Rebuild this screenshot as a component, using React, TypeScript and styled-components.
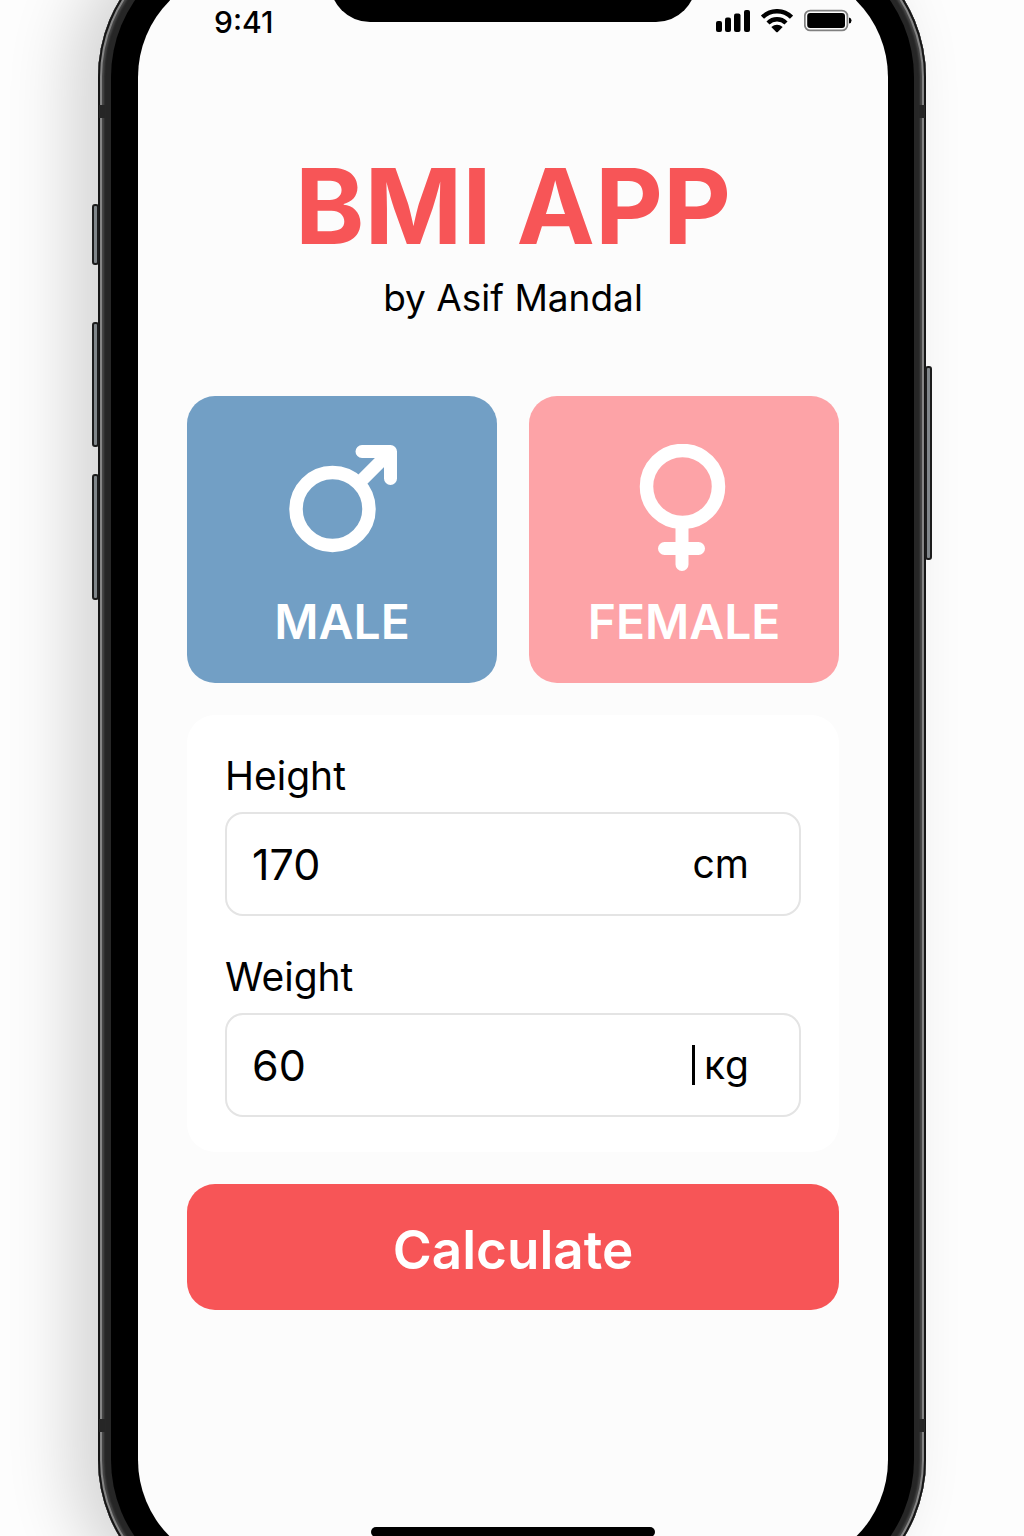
import React, { useState } from "react";
import styled, { createGlobalStyle } from "styled-components";

const GlobalStyle = createGlobalStyle`
  *, *::before, *::after { box-sizing: border-box; }
  body {
    margin: 0;
    background: #fdfdfd;
    color: #000;
    font-family: Inter, "Liberation Sans", sans-serif;
  }
`;

const Stage = styled.div`
  display: flex;
  justify-content: center;
  overflow: hidden;
`;

const Phone = styled.div`
  position: relative;
  width: 100%;
  max-width: 828px;
  margin: -71px 0;
  padding: 13px 12px 13px 13px;
  border-radius: 148px;
  background: #262626;
  box-shadow:
    inset 0 0 0 2px #151515,
    inset 0 0 0 4px #858585,
    inset 0 0 2px 6px #484848,
    -28px 0 64px rgba(0, 0, 0, 0.16);
`;

const SideButton = styled.span<{ $side: "left" | "right"; $top: number; $length: number }>`
  position: absolute;
  ${(p) => p.$side}: -6px;
  top: ${(p) => p.$top}px;
  width: 7px;
  height: ${(p) => p.$length}px;
  border: 2px solid #1c1c1c;
  border-radius: 3px;
  background: #80868a;
`;

const Antenna = styled.span<{ $side: "left" | "right"; $edge: "top" | "bottom" }>`
  position: absolute;
  ${(p) => p.$side}: 1px;
  ${(p) => p.$edge}: 176px;
  width: 6px;
  height: 13px;
  background: #262626;
`;

const Bezel = styled.div`
  padding: 27px 26px 27px 27px;
  border-radius: 135px;
  background: #000;
`;

const Screen = styled.div`
  display: flex;
  flex-direction: column;
  border-radius: 108px;
  background: #fcfcfc;
  overflow: hidden;
`;

const StatusBar = styled.div`
  display: grid;
  grid-template-columns: 1fr 366px 1fr;
  align-items: start;
`;

const Time = styled.time`
  padding: 38px 0 0 76px;
  font-size: 30px;
  line-height: 30px;
  font-weight: 500;
`;

const Notch = styled.div`
  height: 53px;
  border-radius: 0 0 40px 40px;
  background: #000;
`;

const Indicators = styled.div`
  display: flex;
  justify-content: flex-end;
  align-items: center;
  height: 68px;
  gap: 11px;
  padding: 36px 36px 0 0;
`;

const Content = styled.main`
  display: flex;
  flex-direction: column;
  gap: 32px;
  padding: 113px 49px 217px;
`;

const Header = styled.header`
  display: flex;
  flex-direction: column;
  gap: 14px;
  margin-bottom: 44px;
  text-align: center;
`;

const Title = styled.h1`
  margin: 0;
  color: #f75557;
  font-size: 105px;
  line-height: 112px;
  font-weight: 700;
`;

const Byline = styled.p`
  margin: 0;
  font-size: 37px;
  line-height: 44px;
`;

const Genders = styled.div`
  display: grid;
  grid-template-columns: 1fr 1fr;
  gap: 32px;
`;

const GenderCard = styled.button<{ $color: string }>`
  display: flex;
  flex-direction: column;
  align-items: center;
  gap: 22px;
  padding: 48px 16px 33px;
  border: 0;
  border-radius: 28px;
  background: ${(p) => p.$color};
  color: #fff;
  font: inherit;
  font-size: 48px;
  line-height: 56px;
  font-weight: 600;
  cursor: pointer;
`;

const FormCard = styled.div`
  display: flex;
  flex-direction: column;
  gap: 37px;
  padding: 37px 38px 35px;
  border-radius: 28px;
  background: #fff;
`;

const Field = styled.div`
  display: flex;
  flex-direction: column;
  gap: 12px;
`;

const Label = styled.label`
  font-size: 39px;
  line-height: 48px;
`;

const InputBox = styled.div`
  display: flex;
  align-items: center;
  height: 104px;
  padding: 0 50px 0 25px;
  border: 2px solid #e4e4e4;
  border-radius: 18px;
`;

const NumberInput = styled.input`
  flex: 1;
  min-width: 0;
  padding: 0;
  border: 0;
  outline: 0;
  background: transparent;
  color: inherit;
  font: inherit;
  font-size: 43px;
  line-height: 56px;
`;

const Unit = styled.span`
  font-size: 39px;
  line-height: 48px;
`;

const Caret = styled.span`
  width: 3px;
  height: 40px;
  margin-right: 9px;
  background: #000;
`;

const Calculate = styled.button`
  height: 126px;
  padding: 6px 16px 0;
  border: 0;
  border-radius: 28px;
  background: #f75557;
  color: #fff;
  font: inherit;
  font-size: 53px;
  font-weight: 600;
  cursor: pointer;
`;

const HomeBar = styled.div`
  width: 284px;
  height: 10px;
  margin: 0 auto 31px;
  border-radius: 5px;
  background: #000;
`;

const SignalIcon = () => (
  <svg width="34" height="24" viewBox="0 0 34 24" aria-hidden="true">
    <rect x="0" y="12" width="6" height="11" rx="2" />
    <rect x="9" y="8.500" width="6" height="14.500" rx="2" />
    <rect x="18" y="4.500" width="6.500" height="18.500" rx="2" />
    <rect x="28" y="1" width="6" height="22" rx="2" />
  </svg>
);

const WifiIcon = () => (
  <svg width="32" height="24" viewBox="0 0 32 24" aria-hidden="true">
    <g fill="none" stroke="#000" strokeWidth="4.400">
      <path d="M1.500 8.200 A20.500 20.500 0 0 1 30.500 8.200" />
      <path d="M7 14 A12.800 12.800 0 0 1 25 14" />
    </g>
    <path d="M10.300 18 Q16 13.400 21.700 18 L16.800 23 Q16 23.700 15.200 23 Z" />
  </svg>
);

const BatteryIcon = () => (
  <svg width="48" height="24" viewBox="0 0 48 24" aria-hidden="true">
    <rect x="0.800" y="1.600" width="42.600" height="19.800" rx="5.500" fill="none" stroke="#808080" strokeWidth="1.800" />
    <rect x="3.200" y="4" width="37.800" height="15" rx="3" />
    <path d="M45 8.500 Q47.500 9 47.500 11.500 Q47.500 14 45 14.500 Z" />
  </svg>
);

const MaleIcon = () => (
  <svg width="112" height="128" viewBox="0 0 112 128" fill="none" stroke="#fff" strokeWidth="13" strokeLinecap="round" strokeLinejoin="round" aria-hidden="true">
    <circle cx="46.500" cy="65" r="36.500" strokeWidth="13.500" />
    <path d="M76 7.500 H104.500 V34.500" />
    <path d="M103.500 8.500 L73.500 38.500" strokeLinecap="butt" />
  </svg>
);

const FemaleIcon = () => (
  <svg width="112" height="128" viewBox="0 0 112 128" fill="none" stroke="#fff" strokeWidth="13" strokeLinecap="round" aria-hidden="true">
    <circle cx="54.500" cy="42.500" r="36" strokeWidth="13.500" />
    <path d="M54 80 V120.500 M36.500 104.500 H70.500" />
  </svg>
);

export default function App() {
  const [height, setHeight] = useState("170");
  const [weight, setWeight] = useState("60");

  return (
    <>
      <GlobalStyle />
      <Stage>
        <Phone>
          <SideButton $side="left" $top={275} $length={61} />
          <SideButton $side="left" $top={393} $length={125} />
          <SideButton $side="left" $top={545} $length={126} />
          <SideButton $side="right" $top={437} $length={194} />
          <Antenna $side="left" $edge="top" />
          <Antenna $side="right" $edge="top" />
          <Antenna $side="left" $edge="bottom" />
          <Antenna $side="right" $edge="bottom" />
          <Bezel>
            <Screen>
              <StatusBar>
                <Time>9:41</Time>
                <Notch />
                <Indicators>
                  <SignalIcon />
                  <WifiIcon />
                  <BatteryIcon />
                </Indicators>
              </StatusBar>
              <Content>
                <Header>
                  <Title>BMI APP</Title>
                  <Byline>by Asif Mandal</Byline>
                </Header>
                <Genders>
                  <GenderCard type="button" $color="#729fc5">
                    <MaleIcon />
                    MALE
                  </GenderCard>
                  <GenderCard type="button" $color="#fda3a7">
                    <FemaleIcon />
                    FEMALE
                  </GenderCard>
                </Genders>
                <FormCard>
                  <Field>
                    <Label htmlFor="height">Height</Label>
                    <InputBox>
                      <NumberInput id="height" inputMode="numeric" value={height} onChange={(e) => setHeight(e.target.value)} />
                      <Unit>cm</Unit>
                    </InputBox>
                  </Field>
                  <Field>
                    <Label htmlFor="weight">Weight</Label>
                    <InputBox>
                      <NumberInput id="weight" inputMode="numeric" value={weight} onChange={(e) => setWeight(e.target.value)} />
                      <Caret />
                      <Unit>кg</Unit>
                    </InputBox>
                  </Field>
                </FormCard>
                <Calculate type="button">Calculate</Calculate>
              </Content>
              <HomeBar />
            </Screen>
          </Bezel>
        </Phone>
      </Stage>
    </>
  );
}
